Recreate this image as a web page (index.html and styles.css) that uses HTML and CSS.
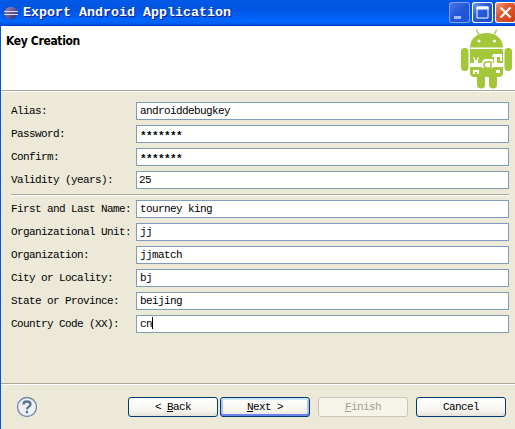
FILE: index.html
```html
<!DOCTYPE html>
<html lang="en">
<head>
<meta charset="utf-8">
<title>Export Android Application</title>
<link rel="stylesheet" href="styles.css">
</head>
<body>
<div class="window">
  <header class="titlebar">
    <svg class="app-icon" width="14" height="14" viewBox="0 0 14 14">
      <defs><linearGradient id="orb" x1="0" y1="0" x2="1" y2="1"><stop offset="0" stop-color="#b8849c"/><stop offset=".5" stop-color="#655a9c"/><stop offset="1" stop-color="#28266c"/></linearGradient></defs>
      <circle cx="7" cy="7" r="6.3" fill="url(#orb)"/>
      <path d="M0 5.5h14M0 8.5h14" stroke="#d8d8f0"/>
    </svg>
    <h1 class="title">Export Android Application</h1>
    <div class="controls">
      <button class="control minimize" aria-label="Minimize"><svg width="21" height="21"><path d="M5 15.5h7" stroke="#9fb9fa" stroke-width="3"/></svg></button>
      <button class="control" aria-label="Maximize"><svg width="21" height="21"><path d="M5 5h11v11H5z" fill="none" stroke="#fff"/><path d="M4.5 6h12" stroke="#fff" stroke-width="3"/></svg></button>
      <button class="control close" aria-label="Close"><svg width="21" height="21"><path d="M5.5 5.5l10 10M15.500 5.500l-10 10" stroke="#fff" stroke-width="2.200"/></svg></button>
    </div>
  </header>
  <section class="banner">
    <h2 class="heading">Key Creation</h2>
    <svg class="robot" width="52" height="60" viewBox="0 0 52 60">
      <g fill="#a4c639">
        <path d="M9 18.500C9 9 17 4 25.500 4S42 9 42 18.500z"/>
        <path d="M18 6l-2.500-5M33 6l2.500-5" stroke="#a4c639" stroke-width="1.300" stroke-linecap="round"/>
        <rect x="0" y="19" width="7.500" height="23" rx="3.700"/>
        <rect x="43.500" y="19" width="7.500" height="23" rx="3.700"/>
        <path d="M9 20h33v24a4 4 0 0 1-4 4H13a4 4 0 0 1-4-4z"/>
        <rect x="16" y="42" width="8" height="17.500" rx="4"/>
        <rect x="28" y="42" width="8" height="17.500" rx="4"/>
      </g>
      <g fill="#fff">
        <circle cx="18" cy="12" r="1.500"/><circle cx="33.500" cy="12" r="1.500"/>
        <path d="M8.500 34H42v4H8.500zM13 34v-3l-1-3 2 1v2h2v-2l2-1-1 4v2zM32 25h9v7h-2v-4h-3v6h-3v-6h-2z"/>
        <path d="M12 41h6v4h-2v-2h-2v2h-2zM35 41h4v3h-4z"/>
        <path d="M21 39v-5q0-4 4-4h7v9z"/>
      </g>
      <path d="M30 40v-7h-4q-3 0-3 3t3 3h4" fill="none" stroke="#a4c639" stroke-width="1.500"/>
    </svg>
  </section>
  <main class="form">
    <div class="group">
      <label class="row"><span>Alias:</span><span class="field">androiddebugkey</span></label>
      <label class="row"><span>Password:</span><span class="field stars">*******</span></label>
      <label class="row"><span>Confirm:</span><span class="field stars">*******</span></label>
      <label class="row"><span>Validity (years):</span><span class="field number">25</span></label>
    </div>
    <div class="group identity">
      <label class="row"><span>First and Last Name:</span><span class="field">tourney king</span></label>
      <label class="row"><span>Organizational Unit:</span><span class="field">jj</span></label>
      <label class="row"><span>Organization:</span><span class="field">jjmatch</span></label>
      <label class="row"><span>City or Locality:</span><span class="field">bj</span></label>
      <label class="row"><span>State or Province:</span><span class="field">beijing</span></label>
      <label class="row"><span>Country Code (XX):</span><span class="field">cn<i class="caret"></i></span></label>
    </div>
  </main>
  <footer class="footer">
    <svg class="help" width="22" height="22" viewBox="0 0 22 22">
      <circle cx="11" cy="11" r="9.500" fill="#eef0f5" stroke="#7488a8" stroke-width="1.300"/>
      <path d="M7.500 8.500Q7.500 5.500 11 5.500T14.500 8.300Q14.500 10 12.500 11Q11 11.800 11 13.300M11 14.800v2.400" fill="none" stroke="#5d7395" stroke-width="2.300"/>
    </svg>
    <button class="btn">&lt; <u>B</u>ack</button>
    <button class="btn default"><u>N</u>ext &gt;</button>
    <button class="btn finish" disabled><u>F</u>inish</button>
    <button class="btn">Cancel</button>
  </footer>
</div>
</body>
</html>
```

FILE: styles.css
```css
* { box-sizing: border-box; }
body {
  margin: 0;
  overflow: hidden;
  font: 11px/16px "Liberation Mono", monospace;
  letter-spacing: -0.6px;
  color: #000;
}
.window {
  width: 515px;
  height: 429px;
  display: flex;
  flex-direction: column;
  background: #ece9d8;
  border-left: 1px solid #0054e3;
}
.titlebar {
  height: 26px;
  margin-left: -1px;
  padding: 0 0 1px 4px;
  display: flex;
  align-items: center;
  background: linear-gradient(#0058e6 0, #0055e0 30%, #0058ea 50%, #0066fe 78%, #0061f5 88%, #0040c8 100%);
}
.title {
  margin: 0 0 0 5px;
  flex: 1;
  font: bold 13.333px/20px "Liberation Mono", monospace;
  letter-spacing: 0;
  color: #fff;
  text-shadow: 1px 1px #0a1883;
}
.controls { display: flex; gap: 2px; width: 66px; }
.control {
  flex: none;
  width: 21px;
  height: 21px;
  padding: 0;
  border: 0;
  border-radius: 3px;
  box-shadow: inset 0 0 0 1px #fff;
  background: linear-gradient(135deg, #7f9ff0, #2a5de0 40%, #1947c4);
}
.control svg { display: block; }
.minimize { box-shadow: inset 0 0 0 1px #7f9eed; background: linear-gradient(135deg, #5179e4, #2255d8 50%, #2356d5); }
.close { background: linear-gradient(135deg, #f0a080, #e35a32 40%, #c83a12); }
.banner {
  height: 66px;
  padding: 0 2px 0 5px;
  display: flex;
  justify-content: space-between;
  background: #fff;
  border-bottom: 1px solid #fff;
  box-shadow: inset 0 -1px #aca899;
}
.heading {
  margin: 7px 0 0;
  font: bold 12px/16px "DejaVu Sans Condensed", "DejaVu Sans", sans-serif;
  letter-spacing: -0.35px;
}
.robot { margin: 3px 0 0; }
.form { flex: 1; padding: 10px 6px 0 10px; }
.group { display: grid; gap: 5px; }
.identity {
  margin-top: 5px;
  padding-top: 5px;
  border-top: 1px solid #aca899;
  box-shadow: inset 0 1px #fff;
}
.row {
  height: 18px;
  display: grid;
  grid-template-columns: 125px 1fr;
  line-height: 19px;
  white-space: nowrap;
}
.field {
  height: 18px;
  padding-left: 3px;
  background: #fff;
  border: 1px solid #7f9db9;
  line-height: 17px;
}
.number { padding-left: 2px; }
.stars { font-weight: bold; line-height: 20px; }
.caret { display: inline-block; width: 1px; height: 12px; background: #000; vertical-align: -2px; }
.footer {
  height: 46px;
  padding: 13px 8px 0 15px;
  display: flex;
  align-items: flex-start;
  border-top: 1px solid #aca899;
  box-shadow: inset 0 1px #fff;
}
.help { margin: -1px 90px 0 0; }
.btn {
  width: 90px;
  height: 20px;
  padding: 0;
  border: 1px solid #003c74;
  border-radius: 3px;
  background: linear-gradient(#fff, #f5f4ef 70%, #e4e1d6);
  color: #000;
  font: inherit;
  line-height: 18px;
  letter-spacing: inherit;
}
.btn.default { margin: 0 8px 0 2px; box-shadow: inset 0 2px #cee7ff, inset 0 -2px #6982ee, inset 2px 0 #a9c2f2, inset -2px 0 #a9c2f2; }
.btn.finish { margin-right: 8px; border-color: #c9c7ba; background: #f5f4ea; color: #a1a192; }
```
